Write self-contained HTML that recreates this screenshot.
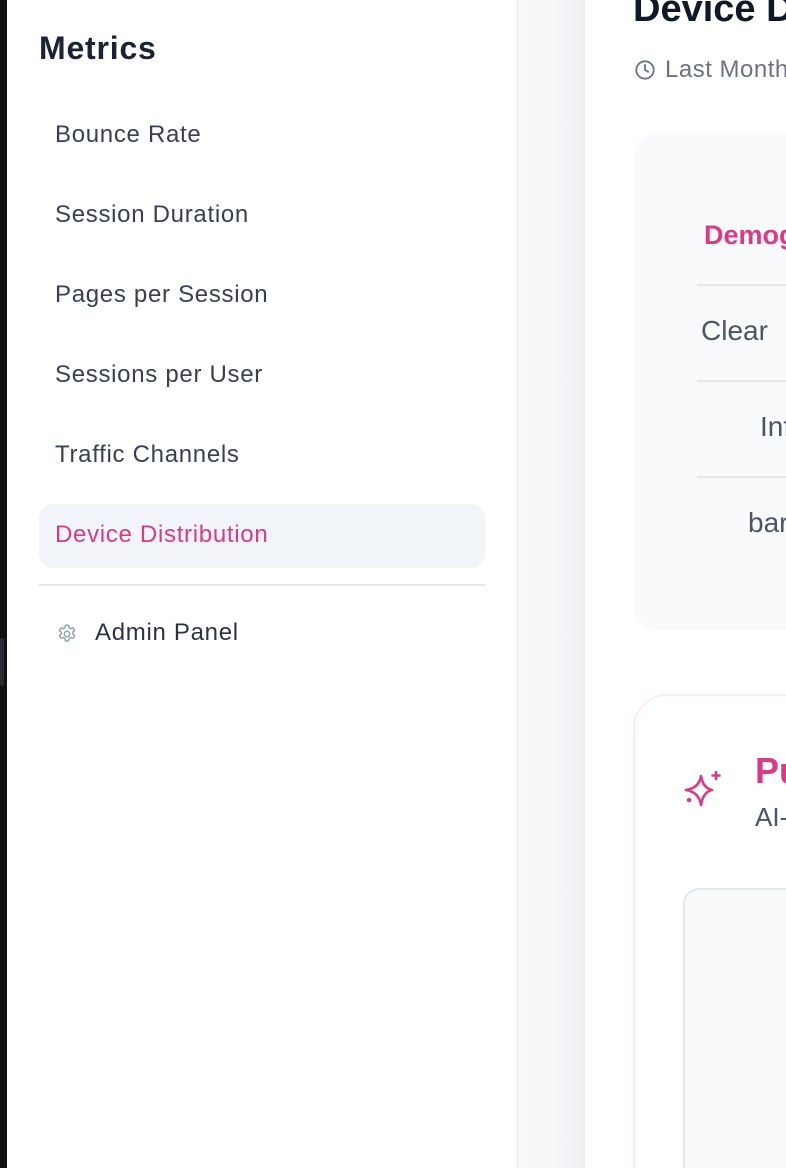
<!DOCTYPE html>
<html><head><meta charset="utf-8"><style>
*{margin:0;padding:0;box-sizing:border-box}
html,body{width:786px;height:1168px;overflow:hidden}
body{background:#fff;font-family:"Liberation Sans",sans-serif;color:#374151}
.wrap{position:relative;width:786px;height:1168px;overflow:hidden}
.dark{position:absolute;left:0;top:0;width:7px;height:1168px;background:#111114}
.scroll{position:absolute;left:0;top:638px;width:4px;height:48px;background:#2a2b33;border-radius:2px}
.side{position:absolute;left:7px;top:0;width:511px;height:1168px;background:#fff;border-right:1px solid #e5e7eb}
.gap{position:absolute;left:518px;top:0;width:67px;height:1168px;background:linear-gradient(90deg,#f8f9fb 0%,#f7f8fa 50%,#eff0f4 100%)}
h2{position:absolute;left:39px;top:30px;font-size:32px;font-weight:bold;color:#1a2233;letter-spacing:0.8px;line-height:1.15}
.item{position:absolute;left:55px;font-size:24px;color:#374151;letter-spacing:0.7px;white-space:nowrap;line-height:1.15}
.active{position:absolute;left:39px;top:504px;width:446px;height:64px;background:#f1f4f8;border-radius:14px}
.hr{position:absolute;left:39px;top:584px;width:446px;height:2px;background:#e5e7eb}
.main{position:absolute;left:585px;top:0;width:201px;height:1168px;background:#fff;overflow:hidden}
.main div{white-space:nowrap}
</style></head><body><div class="wrap">
<div class="dark"></div><div class="scroll"></div>
<div class="side"></div>
<h2>Metrics</h2>
<div class="item" style="top:121px">Bounce Rate</div>
<div class="item" style="top:201px">Session Duration</div>
<div class="item" style="top:281px">Pages per Session</div>
<div class="item" style="top:361px">Sessions per User</div>
<div class="item" style="top:441px">Traffic Channels</div>
<div class="active"></div>
<div class="item" style="top:521px;color:#db3a86">Device Distribution</div>
<div class="hr"></div>
<svg style="position:absolute;left:56px;top:623px" width="22" height="22" viewBox="0 0 24 24" fill="none" stroke="#94a3b8" stroke-width="1.6" stroke-linejoin="round"><path d="M10.3 2.5h3.4l.5 2.6 1.9 1.1 2.5-.9 1.7 2.9-2 1.7v2.2l2 1.7-1.7 2.9-2.5-.9-1.9 1.1-.5 2.6h-3.4l-.5-2.6-1.9-1.1-2.5.9-1.7-2.9 2-1.7v-2.2l-2-1.7 1.7-2.9 2.5.9 1.9-1.1z"/><circle cx="12" cy="12" r="3"/></svg>
<div class="item" style="top:619px;left:95px;color:#2b3447">Admin Panel</div>
<div class="gap"></div>
<div class="main">
<div style="position:absolute;left:48px;top:-12px;font-size:38px;font-weight:bold;color:#111827;line-height:1.15">Device Distribution</div>
<svg style="position:absolute;left:49px;top:59px" width="22" height="22" viewBox="0 0 24 24" fill="none" stroke="#6b7280" stroke-width="2" stroke-linecap="round"><circle cx="12" cy="12" r="9.5"/><path d="M12 6.5V12l3.5 2"/></svg>
<div style="position:absolute;left:80px;top:56px;font-size:24px;color:#6b7280;letter-spacing:0.5px;line-height:1.15">Last Month</div>
<div style="position:absolute;left:48px;top:133px;width:260px;height:497px;background:#f9fafb;border-radius:26px"></div>
<div style="position:absolute;left:119px;top:220px;font-size:27px;font-weight:bold;color:#db3a86;line-height:1.15">Demographics</div>
<div style="position:absolute;left:112px;top:284px;width:200px;height:2px;background:#e5e7eb"></div>
<div style="position:absolute;left:116px;top:315px;font-size:28px;color:#4b5563;line-height:1.15">Clear</div>
<div style="position:absolute;left:112px;top:380px;width:200px;height:2px;background:#e5e7eb"></div>
<div style="position:absolute;left:175px;top:411px;font-size:28px;color:#4b5563;line-height:1.15">Info</div>
<div style="position:absolute;left:112px;top:476px;width:200px;height:2px;background:#e5e7eb"></div>
<div style="position:absolute;left:163px;top:507px;font-size:28px;color:#4b5563;line-height:1.15">bar</div>
<div style="position:absolute;left:48px;top:694px;width:153px;height:474px;background:#fff;border:2px solid #fcecf2;border-right:none;border-bottom:none;border-radius:34px 0 0 0"></div>
<svg style="position:absolute;left:99px;top:771px" width="38" height="40" viewBox="0 0 38 40" fill="none" stroke="#db3a86" stroke-width="2.6" stroke-linecap="round" stroke-linejoin="round"><path d="M17 5 Q19 17 28 19 Q19 21 17 34 Q15 21 2 19 Q15 17 17 5z"/><path d="M32 1v7M28.5 4.5h7"/><circle cx="5" cy="29" r="1" fill="#db3a86"/></svg>
<div style="position:absolute;left:170px;top:750px;font-size:36px;font-weight:bold;color:#db3a86;line-height:1.15">Pulse</div>
<div style="position:absolute;left:170px;top:803px;font-size:26px;color:#4b5563;line-height:1.15">AI-powered</div>
<div style="position:absolute;left:98px;top:888px;width:103px;height:280px;background:#f9fafb;border:2px solid #e2e8f0;border-right:none;border-bottom:none;border-radius:16px 0 0 0"></div>
</div>
</div></body></html>
